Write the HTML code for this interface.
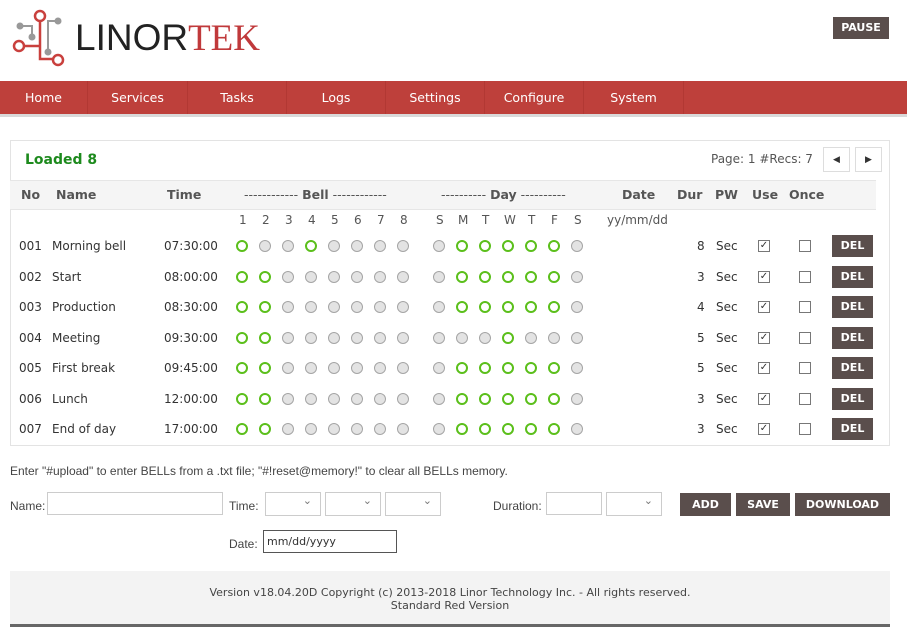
<!DOCTYPE html>
<html><head><meta charset="utf-8"><style>
*{box-sizing:border-box;margin:0;padding:0}
body{width:907px;height:627px;background:#fff;font-family:"DejaVu Sans","Liberation Sans",sans-serif;font-size:12px;color:#333;position:relative;overflow:hidden}
.a{position:absolute;white-space:nowrap}
.nav{position:absolute;left:0;top:81px;width:907px;height:36px;background:#be403b;border-bottom:3px solid #d9d9d9}
.nav span{position:absolute;top:0;height:33px;line-height:33px;color:#fff;font-size:12.5px;text-align:center;border-right:1px solid #b23833}
.c{position:absolute;width:12px;height:12px;border-radius:50%;border:1.5px solid #a5a5a5;background:#e3e3e3}
.g{border:2.5px solid #5bbf1b;background:#fff}
.del{position:absolute;left:832px;width:41px;height:22px;background:#5a4e4c;color:#fff;font-weight:bold;font-size:11px;text-align:center;line-height:22px}
.cb{position:absolute;width:12px;height:12px;border:1px solid #777;background:#fff}
.btn{position:absolute;top:493px;height:23px;background:#5a4e4c;color:#fff;font-weight:bold;font-size:11px;text-align:center;line-height:23px}
.in{position:absolute;border:1px solid #ccc;background:#fff;height:23px}
.sel{position:absolute;border:1px solid #ccc;background:#fff;height:24px;top:492px}
.sel:after{content:"⌄";position:absolute;right:8px;top:1px;font-size:11px;color:#777}
.lb{font-size:12px;font-family:"Liberation Sans",sans-serif;color:#444}
</style></head><body>
<svg class="a" style="left:8px;top:6px" width="60" height="62" viewBox="0 0 60 62">
<g stroke="#999" stroke-width="2" fill="none"><path d="M12 20H24V28"/><path d="M50 15H40V44"/></g>
<circle cx="12" cy="20" r="3.5" fill="#999"/><circle cx="24" cy="31" r="3.5" fill="#999"/><circle cx="50" cy="15" r="3.5" fill="#999"/><circle cx="40" cy="46" r="3.5" fill="#999"/>
<g stroke="#c9403d" stroke-width="2.5" fill="none"><path d="M32 14V53H46"/><path d="M14 40H32"/><circle cx="32" cy="10" r="5" fill="#fff"/><circle cx="11" cy="40" r="5" fill="#fff"/><circle cx="50" cy="54" r="5" fill="#fff"/></g>
</svg>
<div class="a" style="left:75px;top:16px;font-family:'Liberation Sans',sans-serif;font-size:37px;color:#222;line-height:44px">LINOR<span style="color:#c0393b;font-family:'Liberation Serif',serif">TEK</span></div>
<div class="a" style="left:833px;top:17px;width:56px;height:22px;background:#5a4e4c;color:#fff;font-weight:bold;font-size:11px;text-align:center;line-height:22px">PAUSE</div>
<div class="nav">
<span style="left:0;width:88px">Home</span><span style="left:88px;width:100px">Services</span><span style="left:188px;width:99px">Tasks</span><span style="left:287px;width:99px">Logs</span><span style="left:386px;width:99px">Settings</span><span style="left:485px;width:99px">Configure</span><span style="left:584px;width:100px">System</span>
</div>
<div class="a" style="left:10px;top:140px;width:880px;height:306px;border:1px solid #e3e3e3"></div>
<div class="a" style="left:10px;top:180px;width:866px;height:30px;background:#f5f5f5;border-top:1px solid #e6e6e6;border-bottom:1px solid #e6e6e6"></div>
<div class="a" style="left:25px;top:152px;color:#1d8a1d;font-weight:bold;font-size:14px">Loaded 8</div>
<div class="a" style="left:711px;top:152px;font-size:12px;color:#555">Page: 1 #Recs: 7</div>
<div class="a" style="left:823px;top:147px;width:27px;height:25px;border:1px solid #ddd;text-align:center;line-height:24px;font-size:9px">◀</div>
<div class="a" style="left:855px;top:147px;width:27px;height:25px;border:1px solid #ddd;text-align:center;line-height:24px;font-size:9px">▶</div>
<div class="a" style="top:187px;font-weight:bold;color:#555;font-size:12.5px;left:0;width:907px">
<span class="a" style="left:21px">No</span><span class="a" style="left:56px">Name</span><span class="a" style="left:167px">Time</span><span class="a" style="left:244px;font-weight:normal">------------ <b>Bell</b> ------------</span><span class="a" style="left:441px;font-weight:normal">---------- <b>Day</b> ----------</span><span class="a" style="left:622px">Date</span><span class="a" style="left:677px">Dur</span><span class="a" style="left:715px">PW</span><span class="a" style="left:752px">Use</span><span class="a" style="left:789px">Once</span>
</div>
<div class="a" style="top:213px;left:0;width:907px;color:#555">
<span class="a" style="left:239px">1</span><span class="a" style="left:262px">2</span><span class="a" style="left:285px">3</span><span class="a" style="left:308px">4</span><span class="a" style="left:331px">5</span><span class="a" style="left:354px">6</span><span class="a" style="left:377px">7</span><span class="a" style="left:400px">8</span>
<span class="a" style="left:436px">S</span><span class="a" style="left:458px">M</span><span class="a" style="left:482px">T</span><span class="a" style="left:504px">W</span><span class="a" style="left:528px">T</span><span class="a" style="left:551px">F</span><span class="a" style="left:574px">S</span><span class="a" style="left:607px">yy/mm/dd</span>
</div>
<div id="rows"></div>
<script>
var d=[["001","Morning bell","07:30:00","10010000","0111110","8"],["002","Start","08:00:00","11000000","0111110","3"],["003","Production","08:30:00","11000000","0111110","4"],["004","Meeting","09:30:00","11000000","0001000","5"],["005","First break","09:45:00","11000000","0111110","5"],["006","Lunch","12:00:00","11000000","0111110","3"],["007","End of day","17:00:00","11000000","0111110","3"]];
var h="";
d.forEach(function(r,i){var y=246+i*30.5;var t=y-7;
h+='<span class="a" style="left:19px;top:'+t+'px">'+r[0]+'</span><span class="a" style="left:52px;top:'+t+'px">'+r[1]+'</span><span class="a" style="left:164px;top:'+t+'px">'+r[2]+'</span>';
for(var k=0;k<8;k++)h+='<span class="c'+(r[3][k]=="1"?" g":"")+'" style="left:'+(236+k*23)+'px;top:'+(y-6)+'px"></span>';
for(var k=0;k<7;k++)h+='<span class="c'+(r[4][k]=="1"?" g":"")+'" style="left:'+(433+k*23)+'px;top:'+(y-6)+'px"></span>';
h+='<span class="a" style="left:697px;top:'+t+'px">'+r[5]+'</span><span class="a" style="left:716px;top:'+t+'px">Sec</span>';
h+='<span class="cb" style="left:758px;top:'+(y-6)+'px;font-size:10px;line-height:10px;text-align:center">✓</span><span class="cb" style="left:799px;top:'+(y-6)+'px"></span>';
h+='<span class="del" style="top:'+(y-11)+'px">DEL</span>';});
document.getElementById("rows").innerHTML=h;
</script>
<div class="a lb" style="left:10px;top:464px">Enter "#upload" to enter BELLs from a .txt file; "#!reset@memory!" to clear all BELLs memory.</div>
<div class="a lb" style="left:10px;top:499px">Name:</div><div class="in" style="left:47px;top:492px;width:176px"></div>
<div class="a lb" style="left:229px;top:499px">Time:</div>
<div class="sel" style="left:265px;width:56px"></div><div class="sel" style="left:325px;width:56px"></div><div class="sel" style="left:385px;width:56px"></div>
<div class="a lb" style="left:493px;top:499px">Duration:</div><div class="in" style="left:546px;top:492px;width:56px"></div><div class="sel" style="left:606px;width:56px"></div>
<div class="btn" style="left:680px;width:51px">ADD</div><div class="btn" style="left:736px;width:54px">SAVE</div><div class="btn" style="left:795px;width:95px">DOWNLOAD</div>
<div class="a lb" style="left:229px;top:537px">Date:</div><div class="a" style="left:263px;top:530px;width:134px;height:23px;border:1px solid #555;font-size:11px;line-height:21px;padding-left:3px">mm/dd/yyyy</div>
<div class="a" style="left:10px;top:571px;width:880px;height:54px;background:#f3f3f3;text-align:center;font-size:11px;color:#444;padding-top:15px;line-height:13px">Version v18.04.20D Copyright (c) 2013-2018 Linor Technology Inc. - All rights reserved.<br>Standard Red Version</div>
<div class="a" style="left:10px;top:624px;width:880px;height:3px;background:#666"></div>
</body></html>
